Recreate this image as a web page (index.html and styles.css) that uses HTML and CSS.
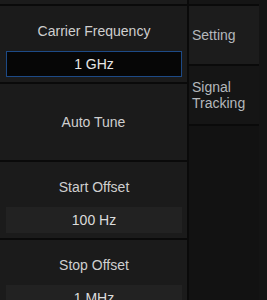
FILE: index.html
```html
<!DOCTYPE html>
<html lang="en">
<head>
    <meta charset="UTF-8">
    <meta name="viewport" content="width=device-width, initial-scale=1.0">
    <title>Signal Tracking</title>
    <link rel="stylesheet" href="styles.css">
</head>
<body>
    <div class="screen">
        <div class="menu">
            <div class="panel panel-cut"></div>
            <div class="panel">
                <div class="label">Carrier Frequency</div>
                <div class="value active">1 GHz</div>
            </div>
            <div class="panel panel-button">
                <div class="label">Auto Tune</div>
            </div>
            <div class="panel">
                <div class="label">Start Offset</div>
                <div class="value">100 Hz</div>
            </div>
            <div class="panel">
                <div class="label">Stop Offset</div>
                <div class="value">1 MHz</div>
            </div>
        </div>

        <div class="tabs">
            <div class="tab tab-cut"></div>
            <div class="tab selected">Setting</div>
            <div class="tab">Signal<br>Tracking</div>
            <div class="tab-fill"></div>
        </div>

        <div class="scroll"></div>
    </div>
</body>
</html>
```

FILE: styles.css
```css
body {
    margin: 0;
    padding: 0;
    background-color: #0a0a0a;
    font-family: "Liberation Sans", Arial, sans-serif;
    overflow: hidden;
}

.screen {
    display: flex;
    height: 300px;
    gap: 2px;
}

.menu {
    width: 187px;
    display: flex;
    flex-direction: column;
    gap: 2px;
    flex-shrink: 0;
}

.panel {
    background-color: #1b1b1b;
    height: 76px;
    flex-shrink: 0;
    box-sizing: border-box;
    padding: 15px 5px 0 6px;
}

.panel-cut {
    height: 4px;
    padding: 0;
}

.panel-button {
    display: flex;
    align-items: center;
    justify-content: center;
    padding: 0;
}

.label {
    color: #cfcfcf;
    font-size: 14px;
    line-height: 20px;
    text-align: center;
}

.value {
    margin-top: 10px;
    height: 26px;
    line-height: 26px;
    box-sizing: border-box;
    background-color: #222222;
    color: #dcdcdc;
    font-size: 14px;
    text-align: center;
}

.value.active {
    background-color: #060606;
    border: 1px solid #1d4a86;
    line-height: 24px;
    color: #e6e6e6;
}

.tabs {
    width: 70px;
    display: flex;
    flex-direction: column;
    gap: 2px;
    flex-shrink: 0;
}

.tab {
    height: 58px;
    flex-shrink: 0;
    box-sizing: border-box;
    background-color: #151515;
    color: #b4b8bc;
    font-size: 14px;
    line-height: 16px;
    padding-left: 3px;
    display: flex;
    align-items: center;
}

.tab.selected {
    background-color: #1c1c1c;
}

.tab-cut {
    height: 4px;
}

.tab-fill {
    flex: 1;
    background-color: #121212;
}

.scroll {
    flex: 1;
    margin-left: -2px;
    background-color: #141414;
}
```
